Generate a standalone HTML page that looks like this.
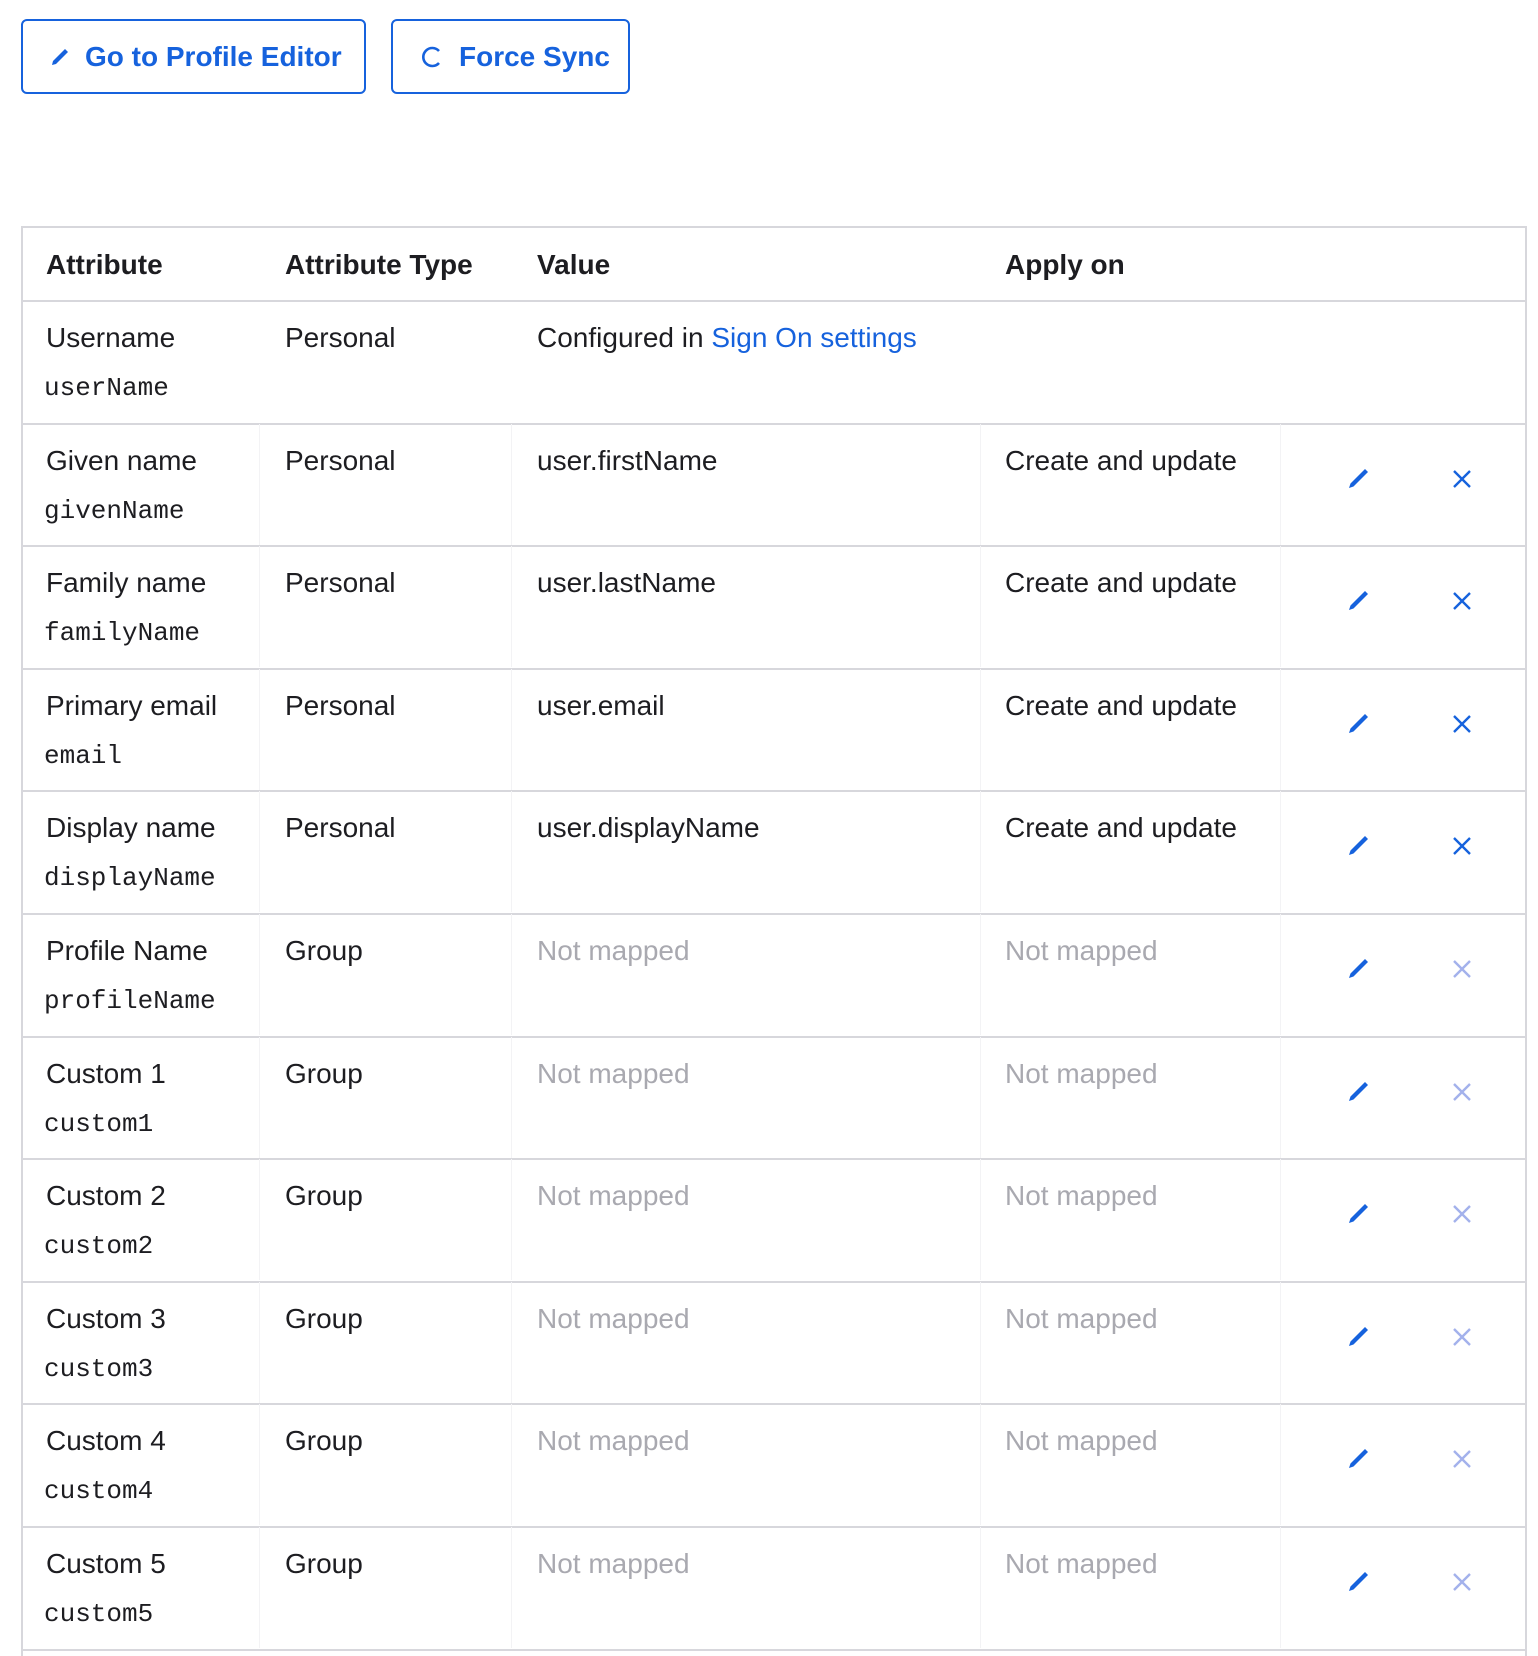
<!DOCTYPE html>
<html><head><meta charset="utf-8"><style>
body{margin:0;width:1538px;height:1644px;background:#fff;font-family:"Liberation Sans",sans-serif;color:#1d1d21;position:relative;overflow:hidden}
.btn{position:absolute;top:19px;height:75px;border:2px solid #1662dd;border-radius:6px;color:#1662dd;font-weight:bold;font-size:28px;box-sizing:border-box;display:flex;align-items:center;gap:14px;padding-left:26px}
.tbl{position:absolute;left:21px;top:226px;width:1506px;height:1430px;border:2px solid #d7d7dc;border-bottom:none;box-sizing:border-box}
.h{position:absolute;top:265px;font-weight:bold;font-size:28px;transform:translateY(-50%)}
.line{position:absolute;left:22px;width:1503px;height:2px;background:#d7d7dc}
.vl{position:absolute;width:1px;background:#f3f3f5}
.t{position:absolute;font-size:28px;line-height:30px;white-space:nowrap}
.m{position:absolute;font-family:"Liberation Mono",monospace;font-size:26px;line-height:30px}
.g{color:#a9a9b0}
a{color:#1662dd;text-decoration:none}
svg{position:absolute}
</style></head><body>
<div class="btn" style="left:21px;width:345px"><svg style="position:static" width="22" height="22" viewBox="0 0 22 22"><path d="M3 19 L4 15 L16 3 L19 6 L7 18 Z" fill="#1662dd"/></svg>Go to Profile Editor</div>
<div class="btn" style="left:391px;width:239px"><svg style="position:static" width="26" height="26" viewBox="0 0 26 26"><path d="M20 7 A9 9 0 1 0 20 19" fill="none" stroke="#1662dd" stroke-width="2.6"/></svg>Force Sync</div>
<div class="tbl"></div>
<div class="h" style="left:46px">Attribute</div>
<div class="h" style="left:285px">Attribute Type</div>
<div class="h" style="left:537px">Value</div>
<div class="h" style="left:1005px">Apply on</div>
<div id="rows"></div>
<script>
var R=[["Username","userName","Personal","Configured in <a>Sign On settings</a>","",0],
["Given name","givenName","Personal","user.firstName","Create and update",1],
["Family name","familyName","Personal","user.lastName","Create and update",1],
["Primary email","email","Personal","user.email","Create and update",1],
["Display name","displayName","Personal","user.displayName","Create and update",1],
["Profile Name","profileName","Group","","",2],
["Custom 1","custom1","Group","","",2],
["Custom 2","custom2","Group","","",2],
["Custom 3","custom3","Group","","",2],
["Custom 4","custom4","Group","","",2],
["Custom 5","custom5","Group","","",2]];
var S=122.6,Y0=301;
var h='<div class="line" style="top:'+(Y0-1)+'px"></div>';
for(var i=0;i<R.length;i++){var r=R[i],y=Math.round(Y0+i*S);
var val=r[5]==2?'<span class="g">Not mapped</span>':r[3];var ap=r[5]==2?'<span class="g">Not mapped</span>':r[4];
h+='<div class="t" style="left:46px;top:'+(y+22)+'px">'+r[0]+'</div>';
h+='<div class="m" style="left:44px;top:'+(y+72)+'px">'+r[1]+'</div>';
h+='<div class="t" style="left:285px;top:'+(y+22)+'px">'+r[2]+'</div>';
h+='<div class="t" style="left:537px;top:'+(y+22)+'px">'+val+'</div>';
h+='<div class="t" style="left:1005px;top:'+(y+22)+'px">'+ap+'</div>';
if(i>0){h+='<div class="vl" style="left:259px;top:'+y+'px;height:121px"></div><div class="vl" style="left:511px;top:'+y+'px;height:121px"></div><div class="vl" style="left:980px;top:'+y+'px;height:121px"></div><div class="vl" style="left:1280px;top:'+y+'px;height:121px"></div>';}
if(r[5]){var c=r[5]==1?'#1662dd':'#a3b1ec';
h+='<svg style="left:1346px;top:'+(y+41)+'px" width="26" height="26" viewBox="0 0 26 26"><path d="M3 23 L4.5 18.5 L19 4 L22 7 L7.5 21.5 Z" fill="#1662dd"/></svg>';
h+='<svg style="left:1451px;top:'+(y+44)+'px" width="22" height="22" viewBox="0 0 22 22"><path d="M3 3 L19 19 M19 3 L3 19" stroke="'+c+'" stroke-width="2.4"/></svg>';}
h+='<div class="line" style="top:'+Math.round(Y0+(i+1)*S-1)+'px"></div>';}
document.getElementById('rows').innerHTML=h;
</script>
</body></html>
